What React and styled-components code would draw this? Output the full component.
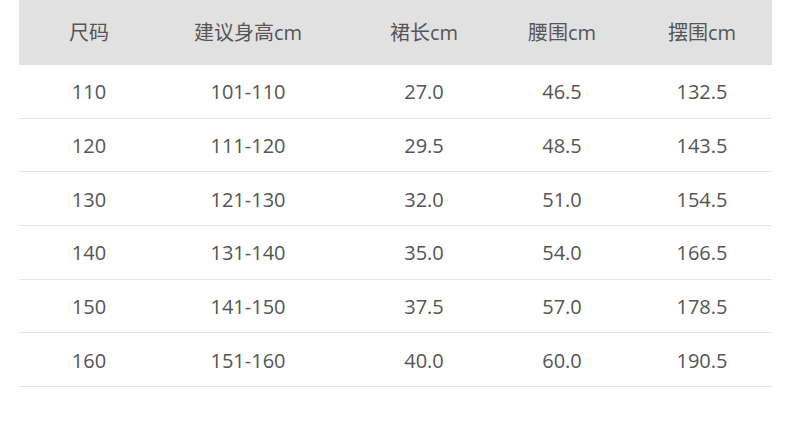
import React from "react";
import styled, { createGlobalStyle } from "styled-components";

const columns = [
  { key: "size", title: "尺码", width: 140, offset: 0 },
  { key: "height", title: "建议身高cm", width: 178, offset: 0 },
  { key: "length", title: "裙长cm", width: 174, offset: 0 },
  { key: "waist", title: "腰围cm", width: 102, offset: 0 },
  { key: "hem", title: "摆围cm", width: 159, offset: 19 },
];

const rows = [
  ["110", "101-110", "27.0", "46.5", "132.5"],
  ["120", "111-120", "29.5", "48.5", "143.5"],
  ["130", "121-130", "32.0", "51.0", "154.5"],
  ["140", "131-140", "35.0", "54.0", "166.5"],
  ["150", "141-150", "37.5", "57.0", "178.5"],
  ["160", "151-160", "40.0", "60.0", "190.5"],
];

const template = columns.map((c) => `${c.width}px`).join(" ");

function App() {
  return (
    <Page>
      <GlobalStyle />
      <Table>
        <HeaderRow>
          {columns.map((c) => (
            <Cell key={c.key} $offset={c.offset}>
              {c.title}
            </Cell>
          ))}
        </HeaderRow>
        {rows.map((r) => (
          <Row key={r[0]}>
            {r.map((v, i) => (
              <Cell key={columns[i].key} $offset={columns[i].offset} $body>
                {v}
              </Cell>
            ))}
          </Row>
        ))}
      </Table>
    </Page>
  );
}

const GlobalStyle = createGlobalStyle`
  * { box-sizing: border-box; }
  html, body { margin: 0; padding: 0; background: #ffffff; }
  body {
    font-family: "Open Sans", "Noto Sans CJK SC", sans-serif;
    color: #555555;
  }
`;

const Page = styled.main`
  width: 790px;
  height: 431px;
  padding: 0 18px 0 19px;
  background: #ffffff;
`;

const Table = styled.div`
  display: flex;
  flex-direction: column;
  width: 753px;
`;

const RowBase = styled.div`
  display: grid;
  grid-template-columns: ${template};
  align-items: center;
`;

const HeaderRow = styled(RowBase)`
  height: 65px;
  background: #e1e1e1;
`;

const Row = styled(RowBase)`
  height: 53.7px;
  border-bottom: 1px solid #e6e6e6;
`;

const Cell = styled.div`
  text-align: center;
  font-size: 20px;
  line-height: 1;
  color: #555555;
  white-space: nowrap;
  padding-left: ${(p) => p.$offset}px;
  padding-top: ${(p) => (p.$body ? 2 : 0)}px;
`;

export default App;
